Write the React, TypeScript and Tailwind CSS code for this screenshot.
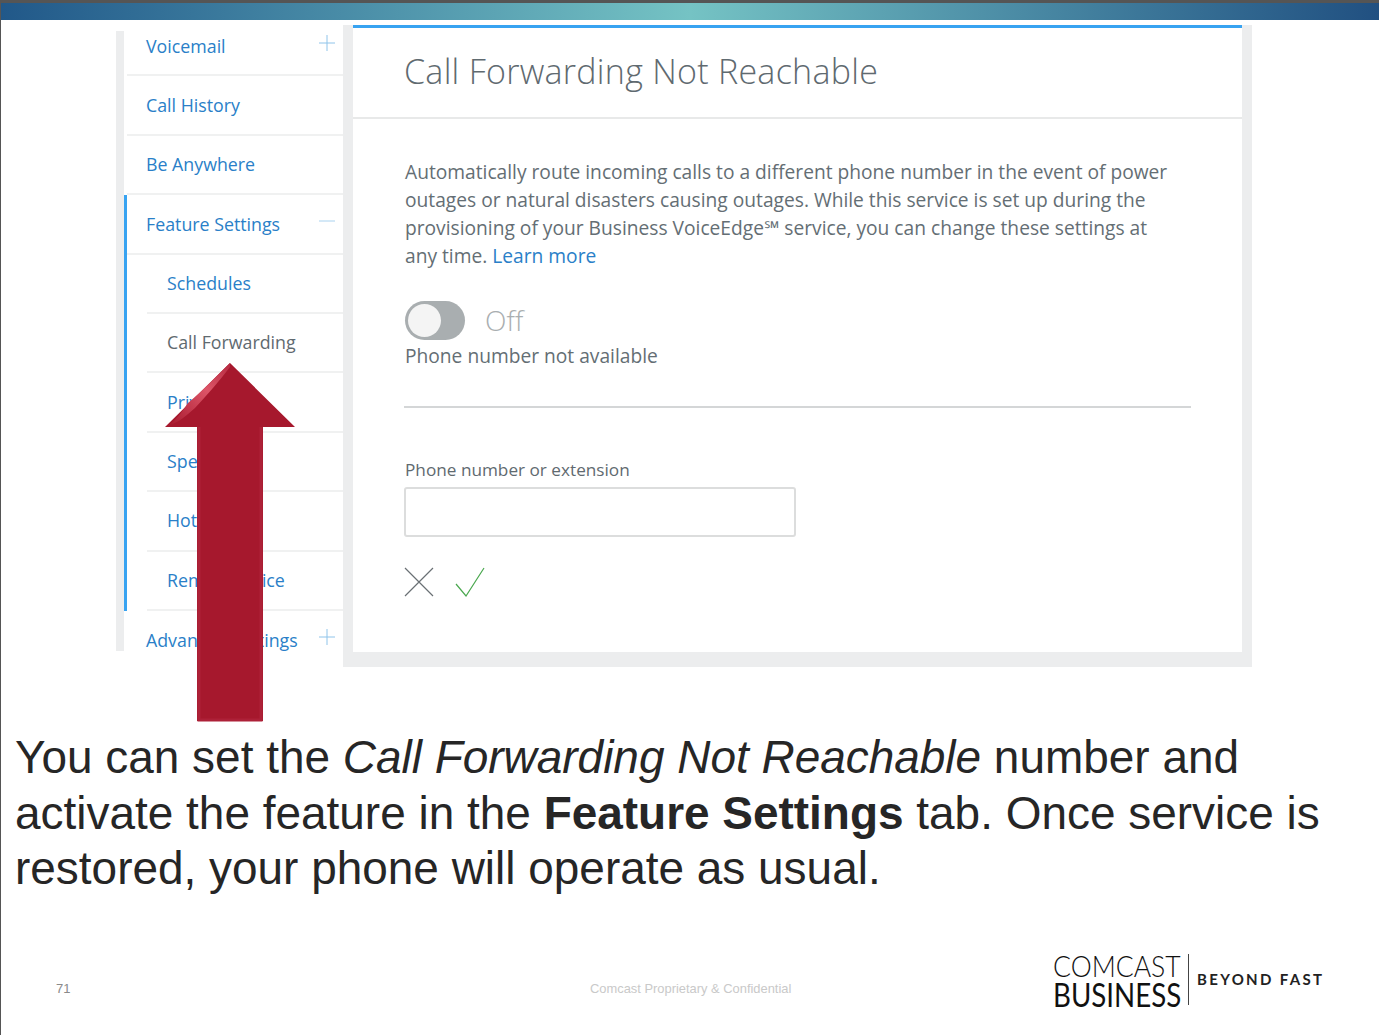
function Plus() {
  return (
    <svg width="16" height="16" viewBox="0 0 16 16" className="text-[#8fc4ea]">
      <path d="M8 0v16M0 8h16" stroke="currentColor" strokeWidth="1" fill="none" />
    </svg>
  )
}

function Minus() {
  return (
    <svg width="16" height="16" viewBox="0 0 16 16" className="text-[#a9d2ef]">
      <path d="M0 8h16" stroke="currentColor" strokeWidth="1" fill="none" />
    </svg>
  )
}

function NavRow({ label, icon, sub, active }: { label: string; icon?: React.ReactNode; sub?: boolean; active?: boolean }) {
  return (
    <div className={sub ? 'ml-[20px] h-[59.4px] border-b-2 border-[#f0f1f1] flex items-center' : 'h-[59.4px] border-b-2 border-[#f0f1f1] flex items-center justify-between pr-[8px]'}>
      <span className={(active ? 'text-[#5f6a70] ' : 'text-[#2a7fc8] ') + (sub ? 'ml-[20px]' : 'ml-[19px]') + ' text-[17.8px] font-[Open_Sans,sans-serif]'}>{label}</span>
      {icon && <span className="mb-[6px]">{icon}</span>}
    </div>
  )
}

function Arrow() {
  return (
    <svg width="132" height="360" viewBox="0 0 132 360" className="absolute left-[163px] top-[362px]">
      <defs>
        <linearGradient id="shine" x1="0" y1="1" x2="1" y2="0">
          <stop offset="0" stopColor="#a6182d" />
          <stop offset="0.6" stopColor="#dd5568" />
          <stop offset="1" stopColor="#b52a40" />
        </linearGradient>
      </defs>
      <polygon points="66,1 131,65 99,65 99,359 33,359 33,65 1,65" fill="#a6182d" />
      <path d="M66 1C52 14 40 28 24 41C18 50 12 58 4 64C16 60 24 52 31 46C44 32 56 18 66 5Z" fill="url(#shine)" />
      <path d="M35 65V358H97V65" stroke="#ad2138" strokeWidth="3" fill="none" />
    </svg>
  )
}

export default function App() {
  return (
    <div className="relative w-[1379px] h-[1035px] overflow-hidden bg-white border-l border-[#555555] font-[Liberation_Sans,sans-serif]">
      <div className="h-[3px] bg-[#555555]" />
      <div className="h-[17px] bg-gradient-to-r from-[#215889] via-[#75c3c4] to-[#215081]" />

      <div className="flex items-start ml-[115px] mt-[5px]">
        <div className="mt-[6px] w-[227px] h-[620px] border-l-[8px] border-[#ecedee] overflow-hidden">
          <div className="h-[45.4px] border-b-2 border-[#f0f1f1] flex items-start justify-between pr-[8px] ml-[3px] pt-[2px]">
            <span className="ml-[19px] text-[17.8px] text-[#2a7fc8] font-[Open_Sans,sans-serif]">Voicemail</span>
            <span className="mt-[2px]"><Plus /></span>
          </div>
          <div className="ml-[3px]">
            <NavRow label="Call History" />
            <NavRow label="Be Anywhere" />
          </div>
          <div className="border-l-[3px] border-[#38a3f1]">
            <NavRow label="Feature Settings" icon={<Minus />} />
            <NavRow sub label="Schedules" />
            <NavRow sub active label="Call Forwarding" />
            <NavRow sub label="Privacy" />
            <NavRow sub label="Speed Dial" />
            <NavRow sub label="Hotline" />
            <NavRow sub label="Remote Office" />
          </div>
          <div className="ml-[3px] flex justify-between pr-[8px] pt-[16px]">
            <span className="ml-[19px] text-[17.8px] text-[#2a7fc8] font-[Open_Sans,sans-serif]">Advanced Settings</span>
            <span className="mt-[2px]"><Plus /></span>
          </div>
        </div>

        <div className="w-[909px] h-[642px] bg-[#ecedee] px-[10px] pb-[15px]">
          <div className="h-full bg-white border-t-[3px] border-[#38a3f1] font-[Open_Sans,sans-serif]">
            <div className="h-[91px] border-b-2 border-[#e8e9e9] pl-[51px] flex items-center">
              <h1 className="text-[34px] font-light text-[#5f6a70] tracking-[0.27px] mb-[2px]">Call Forwarding Not Reachable</h1>
            </div>
            <div className="px-[51px] pt-[39px]">
              <p className="w-[770px] ml-[1px] text-[19.2px] leading-[28px] text-[#646e74]">
                Automatically route incoming calls to a different phone number in the event of power outages or natural disasters causing outages. While this service is set up during the provisioning of your Business VoiceEdge℠ service, you can change these settings at any time. <span className="text-[#2a7fc8]">Learn more</span>
              </p>
              <div className="flex items-center gap-[20px] mt-[29px] ml-[1px]">
                <div className="w-[60px] h-[39px] rounded-full bg-[#a9aeb0] p-[3px]">
                  <div className="w-[33px] h-[33px] rounded-full bg-[#f4f4f4]" />
                </div>
                <span className="text-[28px] font-light text-[#a9aeb0]">Off</span>
              </div>
              <div className="text-[19.2px] ml-[1px] text-[#646e74] leading-[24px] mt-[3px]">Phone number not available</div>
              <div className="w-[787px] h-[2px] bg-[#d4d6d7] mt-[38px]" />
              <label className="block text-[17.2px] ml-[1px] text-[#5f6a70] font-medium mt-[50px] leading-[24px]">Phone number or extension</label>
              <div className="w-[392px] h-[50px] mt-[5px] rounded-[3px] border-2 border-[#dcdddd] bg-white" />
              <div className="flex items-center gap-[20px] mt-[30px]">
                <svg width="30" height="30" viewBox="0 0 30 30">
                  <path d="M1 1L29 29M29 1L1 29" stroke="#6a7074" strokeWidth="1.2" fill="none" />
                </svg>
                <svg width="30" height="30" viewBox="0 0 30 30" className="ml-[1px]">
                  <path d="M1 17L11 29L29 1" stroke="#4aa84f" strokeWidth="1.2" fill="none" />
                </svg>
              </div>
            </div>
          </div>
        </div>
      </div>

      <p className="ml-[14px] mt-[63px] w-[1340px] text-[45.95px] leading-[55.5px] text-[#262626]">
        You can set the <em>Call Forwarding Not Reachable</em> number and activate the feature in the <strong>Feature Settings</strong> tab. Once service is restored, your phone will operate as usual.
      </p>

      <div className="flex items-center mt-[53px] ml-[55px] h-[60px]">
        <span className="w-[534px] shrink-0 mt-[18px] text-[13px] text-[#8a8a8a]">71</span>
        <span className="w-[463px] shrink-0 mt-[18px] text-[12.9px] text-[#c9c9c9]">Comcast Proprietary &amp; Confidential</span>
        <div className="flex items-center shrink-0 font-[Lato,sans-serif]">
          <div className="w-[127px] text-[#111111] whitespace-nowrap">
            <div className="text-[30px] leading-[29px] font-light origin-left scale-x-[0.885]">COMCAST</div>
            <div className="text-[32px] leading-[29px] font-normal origin-left scale-x-[0.865]">BUSINESS</div>
          </div>
          <div className="w-[1px] h-[51px] bg-[#444444] mx-[8px]" />
          <span className="text-[15px] font-bold tracking-[2.35px] text-[#222222] whitespace-nowrap">BEYOND FAST</span>
        </div>
      </div>

      <Arrow />
    </div>
  )
}
